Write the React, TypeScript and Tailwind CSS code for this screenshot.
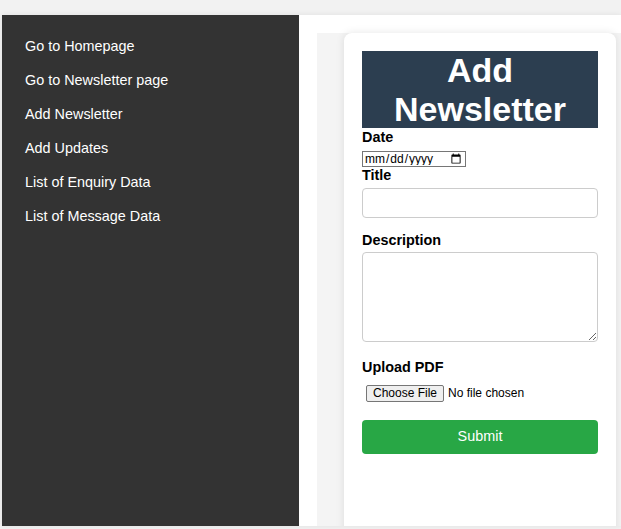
import React from "react";

const links = [
  "Go to Homepage",
  "Go to Newsletter page",
  "Add Newsletter",
  "Add Updates",
  "List of Enquiry Data",
  "List of Message Data",
];

export default function App() {
  return (
    <div
      className="w-[621px] h-[529px] bg-[#f2f2f2] pt-[15px] pl-[2px] overflow-hidden"
      style={{ fontFamily: '"Liberation Sans", Arial, sans-serif' }}
    >
      <div className="flex h-[511px] shadow-[0_0_6px_rgba(0,0,0,0.08)] overflow-hidden">
        <aside className="w-[297px] shrink-0 bg-[#333333] pt-[14px] pl-[23px]">
          <ul>
            {links.map((l) => (
              <li key={l} className="h-[34px] leading-[34px] text-[14.4px] text-white">
                <a href="#">{l}</a>
              </li>
            ))}
          </ul>
        </aside>
        <main className="flex-1 bg-white pt-[18px] pl-[18px] overflow-hidden">
          <div className="w-[340px] h-[600px] bg-[#f4f4f4] pl-[27px]">
            <div className="w-[272px] h-[600px] bg-white rounded-[8px] shadow-[0_0_8px_rgba(0,0,0,0.1)] p-[18px]">
              <h1 className="bg-[#2c3e50] text-white text-center font-bold text-[34px] leading-[38.5px]">
                Add Newsletter
              </h1>
              <label className="block mt-[1px] font-bold text-[14.4px] leading-[17px] text-black mb-[5px]">Date</label>
              <input
                type="date"
                className="block w-[104px] h-[16px] text-[12px] border border-[#767676] px-[1px] leading-none"
              />
              <label className="block font-bold text-[14.4px] leading-[17px] text-black mb-[4px]">Title</label>
              <input
                type="text"
                className="block w-full h-[30px] border border-[#cccccc] rounded-[4px] mb-[14px] px-[8px] text-[14px]"
              />
              <label className="block font-bold text-[14.4px] leading-[17px] text-black mb-[3px]">Description</label>
              <textarea className="block w-full h-[90px] border border-[#cccccc] rounded-[4px] mb-[17px] px-[8px] text-[14px] resize" />
              <label className="block font-bold text-[14.4px] leading-[17px] text-black mb-[5px]">Upload PDF</label>
              <input
                type="file"
                accept="application/pdf"
                className="block w-full p-[4px] text-[12px] leading-[15px] text-black mb-[14px] file:text-[12px] file:border file:border-[#767676] file:bg-[#efefef] file:rounded-[2px] file:px-[6px] file:py-[1px] file:mr-[4px] file:leading-[13px]"
              />
              <button className="block w-full h-[34px] bg-[#28a745] text-white text-[14.4px] rounded-[4px]">
                Submit
              </button>
            </div>
          </div>
        </main>
      </div>
    </div>
  );
}
